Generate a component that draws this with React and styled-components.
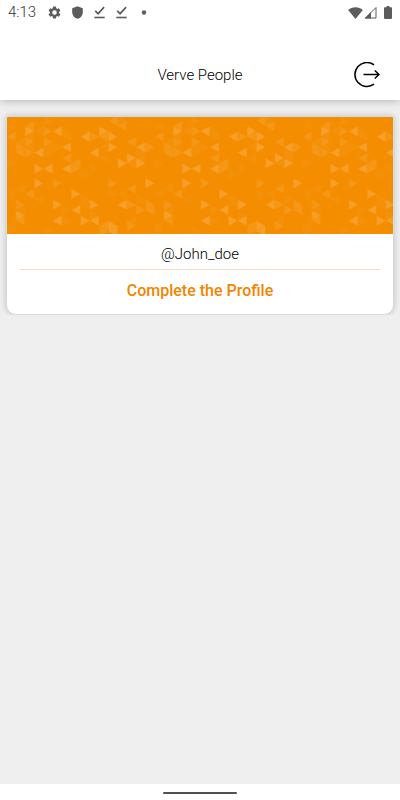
import styled, { createGlobalStyle } from "styled-components";

const GlobalStyle = createGlobalStyle`
  * {
    box-sizing: border-box;
  }
  body {
    margin: 0;
    background-color: #efefef;
    color: #000;
    font-family: Roboto, "Liberation Sans", sans-serif;
  }
`;

const SScreen = styled.div`
  display: flex;
  flex-direction: column;
  min-height: 100vh;
`;

const STop = styled.div`
  position: relative;
  background-color: #fff;
  box-shadow: 0 1px 8px rgba(0, 0, 0, 0.25);
`;

const SStatusBar = styled.div`
  display: flex;
  align-items: center;
  justify-content: space-between;
  height: 25px;
  padding: 0 8px;
  color: #5c5c5c;
`;

const SStatusGroup = styled.div`
  display: flex;
  align-items: center;
  gap: ${(props) => props.$gap}px;
`;

const SClock = styled.span`
  font-size: 15px;
  font-weight: 300;
  line-height: 25px;
  color: #333;
`;

const SHeader = styled.header`
  display: grid;
  grid-template-columns: 1fr auto 1fr;
  align-items: center;
  height: 75px;
  padding: 25px 20px 0;
`;

const STitle = styled.h1`
  grid-column: 2;
  margin: 0;
  font-size: 15px;
  font-weight: 300;
  line-height: 20px;
`;

const SLogoutButton = styled.button`
  display: flex;
  justify-self: end;
  padding: 0;
  border: none;
  background: none;
  color: #000;
  &:hover {
    cursor: pointer;
  }
`;

const SMain = styled.main`
  flex: 1;
`;

const SCardArea = styled.div`
  overflow: hidden;
  padding: 16px 6px 0;
`;

const SCard = styled.section`
  overflow: hidden;
  background-color: #fff;
  border: 1px solid #d3dae0;
  border-radius: 2px 2px 10px 10px;
  box-shadow: 0 0 6px rgba(0, 0, 0, 0.2);
`;

const SBanner = styled.svg`
  display: block;
  width: 100%;
  height: 117px;
`;

const SCardBody = styled.div`
  display: flex;
  flex-direction: column;
  padding: 0 13px;
  text-align: center;
`;

const SHandle = styled.p`
  margin: 0;
  padding: 10px 0 4px;
  border-bottom: 1px solid #fbdccb;
  font-size: 15px;
  font-weight: 300;
  line-height: 21px;
`;

const SProfileLink = styled.a`
  padding: 11px 0 13px;
  color: #f28500;
  font-size: 16px;
  font-weight: 500;
  line-height: 20px;
  text-decoration: none;
`;

const SNavBar = styled.div`
  display: flex;
  align-items: center;
  justify-content: center;
  height: 16px;
  padding-top: 1px;
  background-color: #fff;
`;

const SNavPill = styled.div`
  width: 74px;
  height: 2px;
  border-radius: 1px;
  background-color: #505050;
`;

const COL = 9.25;
const STEP = 16 / 3;

// [column, row, brightness]
const upperTriangles = [
  [4, -9, 1], [11, -9, 2], [12, -9, 1],
  [0, -8, 1], [2, -8, 2], [12, -8, 2],
  [2, -7, 3], [3, -7, 1], [4, -7, 2], [5, -7, 3], [6, -7, 1], [10, -7, 3],
  [0, -6, 2], [2, -6, 1], [6, -6, 1], [8, -6, 3], [9, -6, 2], [10, -6, 2], [11, -6, 3],
  [1, -5, 1], [2, -5, 2], [4, -5, 2], [13, -5, 2],
  [1, -4, 2], [2, -4, 1], [4, -4, 1], [5, -4, 1], [6, -4, 3], [10, -4, 1], [11, -4, 3], [14, -4, 3], [15, -4, 2],
  [1, -3, 2], [2, -3, 2], [3, -3, 3], [4, -3, 1], [9, -3, 3], [14, -3, 1],
  [6, -2, 2], [10, -2, 1], [13, -2, 3], [14, -2, 1],
  [0, -1, 1], [7, -1, 2], [12, -1, 3], [13, -1, 1], [14, -1, 3],
  [3, 0, 3], [4, 0, 3], [6, 0, 3], [7, 0, 2], [9, 0, 1],
  [8, 1, 1],
];

const lowerTriangles = [
  [3, 0, 3], [5, 0, 2], [11, 0, 2], [15, 0, 3],
  [1, 1, 1], [13, 1, 2],
  [0, 2, 1], [2, 2, 2], [7, 2, 3], [11, 2, 1], [12, 2, 1],
  [3, 3, 1], [8, 3, 1], [14, 3, 1],
  [1, 4, 2], [5, 4, 3], [8, 4, 1], [9, 4, 3], [12, 4, 3], [13, 4, 2], [15, 4, 2],
  [1, 5, 1], [6, 5, 1], [7, 5, 3], [14, 5, 2], [15, 5, 2],
  [1, 6, 3], [9, 6, 1],
  [1, 7, 2], [5, 7, 3], [6, 7, 1], [8, 7, 3], [9, 7, 3], [13, 7, 1],
  [0, 8, 1], [10, 8, 2], [11, 8, 3], [13, 8, 2],
  [0, 9, 1], [4, 9, 1], [10, 9, 2], [11, 9, 3],
];

const opacities = { 1: 0.04, 2: 0.09, 3: 0.17 };

const trianglePoints = (col, row, originY) => {
  const pointsRight = Math.abs(col + row) % 2 === 1;
  const left = col * COL + 0.3;
  const right = (col + 1) * COL - 0.3;
  const base = pointsRight ? left : right;
  const tip = pointsRight ? right : left;
  const y = originY + row * STEP;
  return `${base},${y - 4.9} ${base},${y + 4.9} ${tip},${y}`;
};

const Triangles = ({ items, originY }) =>
  items.map(([col, row, level]) => (
    <polygon
      key={`${col}:${row}`}
      points={trianglePoints(col, row, originY)}
      fill="#fff"
      fillOpacity={opacities[level]}
    />
  ));

const Banner = () => (
  <SBanner aria-hidden="true">
    <defs>
      <pattern id="triangles" x="-0.5" y="0" width="148" height="117" patternUnits="userSpaceOnUse">
        <Triangles items={upperTriangles} originY={51.7} />
        <Triangles items={lowerTriangles} originY={66.3} />
      </pattern>
    </defs>
    <rect width="100%" height="117" fill="#f48d00" />
    <rect width="100%" height="117" fill="url(#triangles)" />
  </SBanner>
);

const GearIcon = () => (
  <svg width="15" height="15" viewBox="0 0 24 24" fill="currentColor">
    <path d="M19.14 12.94c.04-.3.06-.61.06-.94s-.02-.64-.07-.94l2.03-1.58a.49.49 0 0 0 .12-.61l-1.92-3.32a.49.49 0 0 0-.59-.22l-2.39.96a7 7 0 0 0-1.62-.94l-.36-2.54a.48.48 0 0 0-.48-.41h-3.84a.48.48 0 0 0-.47.41l-.36 2.54c-.59.24-1.13.57-1.62.94l-2.39-.96a.48.48 0 0 0-.59.22L2.74 8.87a.48.48 0 0 0 .12.61l2.03 1.58a7.5 7.5 0 0 0 0 1.88l-2.03 1.58a.49.49 0 0 0-.12.61l1.92 3.32c.12.22.37.29.59.22l2.39-.96c.5.38 1.03.7 1.62.94l.36 2.54c.05.24.24.41.48.41h3.84c.24 0 .44-.17.47-.41l.36-2.54a7 7 0 0 0 1.62-.94l2.39.96c.22.08.47 0 .59-.22l1.92-3.32a.48.48 0 0 0-.12-.61zM12 15.6a3.6 3.6 0 1 1 0-7.2 3.6 3.6 0 0 1 0 7.2z" />
  </svg>
);

const ShieldIcon = () => (
  <svg width="13" height="13" viewBox="-1 0 13 13" fill="currentColor">
    <path d="M5.5 0.2 10.8 2.2v4c0 3.2-2.2 5.7-5.3 6.6C2.4 11.9.2 9.4.2 6.2v-4z" />
  </svg>
);

const DoneIcon = () => (
  <svg width="13" height="13" viewBox="0 0 13 13" fill="none" stroke="currentColor">
    <path d="M2.2 4.8 5.1 7.7 11.1 1.2" strokeWidth="1.7" />
    <path d="M1.3 11.5H11.7" strokeWidth="1.6" />
  </svg>
);

const DotIcon = () => (
  <svg width="13" height="5" viewBox="0 0 13 5" fill="currentColor">
    <circle cx="7" cy="2.5" r="2.2" />
  </svg>
);

const WifiIcon = () => (
  <svg width="15" height="12" viewBox="0 0 15 12" fill="currentColor">
    <path d="M7.5 12 0.2 2.9C2.2 1.2 4.7.2 7.5.2s5.3 1 7.3 2.7z" />
  </svg>
);

const SignalIcon = () => (
  <svg width="13" height="13" viewBox="0 0 13 13">
    <path d="M1.5 12 12 1.5V12z" fill="none" stroke="currentColor" />
    <path d="M0.5 12.5 7 6v6.5z" fill="currentColor" />
  </svg>
);

const BatteryIcon = () => (
  <svg width="8" height="13" viewBox="0 0 8 13" fill="currentColor">
    <path d="M2.5 0h3v1.3H7.2a.8.8 0 0 1 .8.8v10a.8.8 0 0 1-.8.8H.8a.8.8 0 0 1-.8-.8v-10a.8.8 0 0 1 .8-.8h1.7z" />
  </svg>
);

const LogoutIcon = () => (
  <svg width="26" height="26" viewBox="0 0 26 26" fill="none" stroke="currentColor" strokeWidth="1.5">
    <path d="M20 2.800A12 12 0 1 0 20 22.200" />
    <path d="M9.5 12.5H25M20.800 8.500 25 12.500 20.800 16.500" />
  </svg>
);

const App = () => {
  return (
    <SScreen>
      <GlobalStyle />
      <STop>
        <SStatusBar>
          <SStatusGroup $gap={11}>
            <SClock>4:13</SClock>
            <SStatusGroup $gap={9}>
              <GearIcon />
              <ShieldIcon />
              <DoneIcon />
              <DoneIcon />
              <DotIcon />
            </SStatusGroup>
          </SStatusGroup>
          <SStatusGroup $gap={1}>
            <WifiIcon />
            <SStatusGroup $gap={7}>
              <SignalIcon />
              <BatteryIcon />
            </SStatusGroup>
          </SStatusGroup>
        </SStatusBar>
        <SHeader>
          <STitle>Verve People</STitle>
          <SLogoutButton type="button" aria-label="Log out">
            <LogoutIcon />
          </SLogoutButton>
        </SHeader>
      </STop>

      <SMain>
        <SCardArea>
          <SCard>
            <Banner />
            <SCardBody>
              <SHandle>@John_doe</SHandle>
              <SProfileLink href="#profile">Complete the Profile</SProfileLink>
            </SCardBody>
          </SCard>
        </SCardArea>
      </SMain>

      <SNavBar>
        <SNavPill />
      </SNavBar>
    </SScreen>
  );
};

export default App;
